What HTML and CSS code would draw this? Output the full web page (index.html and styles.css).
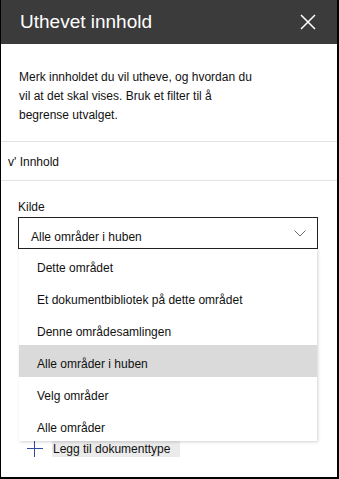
FILE: index.html
```html
<!DOCTYPE html>
<html>
<head>
  <title>Uthevet innhold</title>
  <link rel="stylesheet" href="styles.css">
</head>
<body>
  <div class="panel">
    <div class="header">
      <h2 class="title">Uthevet innhold</h2>
      <svg class="close" width="16" height="16" viewBox="0 0 16 16">
        <path d="M1 1 L15 15 M15 1 L1 15" stroke="#fff" stroke-width="1.5" fill="none"/>
      </svg>
    </div>

    <p class="intro">Merk innholdet du vil utheve, og hvordan du vil at det skal vises. Bruk et filter til å begrense utvalget.</p>

    <div class="section-head">v' Innhold</div>

    <div class="section">
      <label class="field-label">Kilde</label>
      <div class="dropdown">
        <div class="dropdown-box">
          <span class="dropdown-value">Alle områder i huben</span>
          <svg class="chevron" width="12" height="7" viewBox="0 0 12 7">
            <path d="M0.5 0.5 L6 6 L11.5 0.5" stroke="#6b6b6b" stroke-width="1" fill="none"/>
          </svg>
        </div>
        <ul class="menu">
          <li>Dette området</li>
          <li>Et dokumentbibliotek på dette området</li>
          <li>Denne områdesamlingen</li>
          <li class="selected">Alle områder i huben</li>
          <li>Velg områder</li>
          <li>Alle områder</li>
        </ul>
      </div>

      <div class="add-row">
        <svg class="plus" width="16" height="16" viewBox="0 0 16 16">
          <path d="M0 7.5 H16 M7.5 0 V16" stroke="#2f4c9e" stroke-width="1" fill="none"/>
        </svg>
        <span class="add-text">Legg til dokumenttype</span>
      </div>
    </div>
  </div>
</body>
</html>
```

FILE: styles.css
```css
* {
  box-sizing: border-box;
}
body {
  margin: 0;
  font-family: "Liberation Sans", Arial, sans-serif;
  font-size: 12px;
  color: #111;
  background: #fff;
}
.panel {
  height: 479px;
  border-left: 1px solid #000;
  border-right: 2px solid #000;
  border-bottom: 2px solid #000;
  overflow: hidden;
}
.header {
  height: 44px;
  margin-left: -1px;
  background: #3b3b3b;
  display: flex;
  align-items: center;
  justify-content: space-between;
  padding: 0 21px 0 20px;
}
.title {
  margin: 0;
  font-size: 19px;
  font-weight: normal;
  color: #fff;
}
.intro {
  margin: 0;
  padding: 24px 18px 16px;
  line-height: 19px;
  max-width: 276px;
}
.section-head {
  height: 40px;
  border-top: 1px solid #e3e3e3;
  border-bottom: 1px solid #e3e3e3;
  display: flex;
  align-items: center;
  padding: 2px 0 0 7px;
}
.section {
  padding: 17px 0 0 17px;
}
.field-label {
  display: block;
  line-height: 19px;
}
.dropdown {
  position: relative;
  width: 300px;
}
.dropdown-box {
  height: 32px;
  border: 1px solid #222;
  display: flex;
  align-items: center;
  justify-content: space-between;
  padding: 0 11px 0 12px;
}
.dropdown-value {
  padding-top: 7px;
}
.menu {
  position: absolute;
  top: 32px;
  left: 1px;
  width: 298px;
  margin: 0;
  padding: 0;
  list-style: none;
  background: #fff;
  box-shadow: 1px 1px 3px rgba(0, 0, 0, 0.18);
  z-index: 2;
}
.menu li {
  height: 32px;
  display: flex;
  align-items: center;
  padding: 6px 0 0 18px;
}
.menu li.selected {
  background: #dadada;
}
.add-row {
  margin-top: 192px;
  display: flex;
  align-items: center;
  padding-left: 9px;
}
.plus {
  margin-right: 9px;
}
.add-text {
  background: #ebebeb;
  padding: 1px 10px 1px 1px;
  line-height: 14px;
}
```
